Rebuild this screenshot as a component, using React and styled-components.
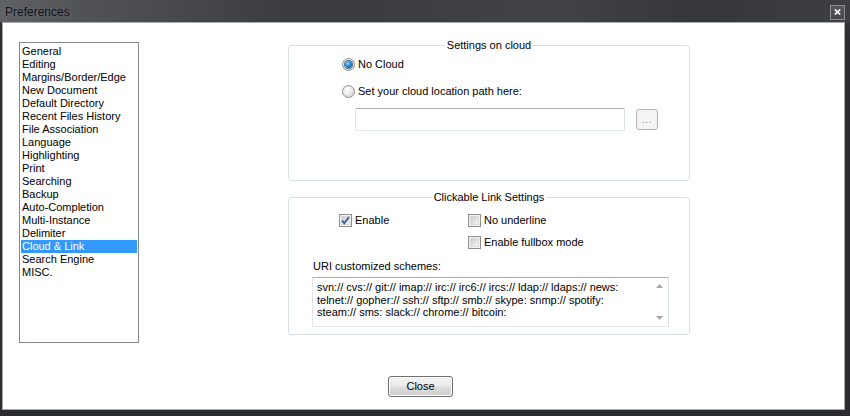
import React from "react";
import styled, { createGlobalStyle } from "styled-components";

const GlobalStyle = createGlobalStyle`
  html, body {
    margin: 0;
    padding: 0;
    background: #2d2f32;
  }
  body {
    font-family: "Liberation Sans", Arial, sans-serif;
    font-size: 11px;
    color: #000;
  }
`;

const Window = styled.div`
  width: 850px;
  height: 416px;
  display: flex;
  flex-direction: column;
  background: linear-gradient(#3b3d41, #2a2c2f 40px, #2a2c2f);
  overflow: hidden;
`;

const TitleBar = styled.div`
  height: 22px;
  display: flex;
  align-items: center;
  justify-content: space-between;
  padding: 0 5px 0 5px;
  box-sizing: border-box;
  background: linear-gradient(90deg, #606266 0px, #515357 80px, #393b3f 300px, #414347 560px, #34363a 700px, #3d3f42 850px);
`;

const Title = styled.span`
  font-size: 12px;
  color: #0e141a;
  text-shadow: 0 0 4px rgba(150, 152, 156, 0.5);
  line-height: 14px;
  padding-top: 2px;
`;

const CloseX = styled.div`
  width: 15px;
  height: 15px;
  box-sizing: border-box;
  border: 1px solid #8d8e91;
  background: linear-gradient(#55575b, #45474b);
  display: flex;
  align-items: center;
  justify-content: center;
  margin-top: 2px;
`;

const Frame = styled.div`
  flex: 1;
  margin: 0 5px 6px 2px;
  border: 1px solid #a9a9a9;
  background: #fff;
  display: flex;
  flex-direction: column;
`;

const Body = styled.div`
  display: flex;
  padding: 19px 0 0 16px;
`;

const ListBox = styled.div`
  width: 120px;
  height: 301px;
  box-sizing: border-box;
  border: 1px solid #828790;
  padding: 2px 1px 0 1px;
  flex-shrink: 0;
`;

const ListItem = styled.div`
  height: 13px;
  line-height: 13px;
  padding-left: 1px;
  white-space: nowrap;
  background: ${(p) => (p.$selected ? "#3399ff" : "transparent")};
  color: ${(p) => (p.$selected ? "#fff" : "#000")};
`;

const Panels = styled.div`
  margin-left: 149px;
  padding-top: 3px;
  display: flex;
  flex-direction: column;
  gap: 16px;
`;

const Group = styled.div`
  width: 402px;
  height: ${(p) => p.$height}px;
  box-sizing: border-box;
  border: 1px solid #d5dfe5;
  border-radius: 3px;
  display: flex;
  flex-direction: column;
`;

const GroupTitle = styled.span`
  align-self: center;
  margin-top: -7px;
  padding: 0 2px;
  background: #fff;
  line-height: 13px;
  height: 13px;
`;

const Row = styled.div`
  display: flex;
  align-items: center;
  height: 13px;
  line-height: 13px;
  margin-top: ${(p) => p.$top || 0}px;
  padding-left: ${(p) => p.$left || 0}px;
`;

const Option = styled.label`
  display: flex;
  align-items: center;
  gap: 3px;
  width: ${(p) => (p.$width ? `${p.$width}px` : "auto")};
  white-space: nowrap;
`;

const Radio = styled.span`
  width: 13px;
  height: 13px;
  box-sizing: border-box;
  border-radius: 50%;
  border: 1px solid #8e8f8f;
  background: radial-gradient(circle at 40% 35%, #ffffff 0%, #eaeaea 45%, #c8c8c8 100%);
  display: flex;
  align-items: center;
  justify-content: center;
  flex-shrink: 0;

  &::after {
    content: "";
    display: ${(p) => (p.$checked ? "block" : "none")};
    width: 7px;
    height: 7px;
    border-radius: 50%;
    background: radial-gradient(circle at 40% 35%, #8fd7ff 0%, #2a8ad4 45%, #0d3f73 100%);
    box-shadow: 0 0 0 1px #4d6b85;
  }
`;

const Checkbox = styled.span`
  width: 13px;
  height: 13px;
  box-sizing: border-box;
  border: 1px solid #8f8f8f;
  background: #f4f4f4;
  display: flex;
  align-items: center;
  justify-content: center;
  flex-shrink: 0;
  position: relative;

  &::before {
    content: "";
    position: absolute;
    inset: 1px;
    background: linear-gradient(135deg, #cbcbcb, #f6f6f6);
    border: 1px solid #d9d9d9;
    box-sizing: border-box;
  }

  svg {
    position: relative;
  }
`;

const PathRow = styled.div`
  display: flex;
  align-items: flex-start;
  margin-top: 10px;
  padding-left: 66px;
  gap: 11px;
`;

const TextInput = styled.div`
  width: 270px;
  height: 23px;
  box-sizing: border-box;
  border: 1px solid #abadb3;
  border-color: #abadb3 #dbdfe6 #e3e9ef #e2e3ea;
  border-radius: 2px;
  background: #fff;
`;

const BrowseButton = styled.div`
  width: 22px;
  height: 21px;
  margin-top: 1px;
  box-sizing: border-box;
  border: 1px solid #b5b5b5;
  border-radius: 3px;
  background: #f4f4f4;
  color: #8c8c8c;
  font-size: 10px;
  line-height: 20px;
  text-align: center;
  letter-spacing: 0.5px;
`;

const Label = styled.div`
  height: 13px;
  line-height: 13px;
  margin-top: ${(p) => p.$top}px;
  padding-left: 24px;
`;

const SchemesBox = styled.div`
  width: 357px;
  height: 50px;
  box-sizing: border-box;
  margin: 4px 0 0 23px;
  border: 1px solid #abadb3;
  border-color: #abadb3 #dbdfe6 #e3e9ef #e2e3ea;
  display: flex;
`;

const SchemesText = styled.div`
  flex: 1;
  padding: 3px 0 0 4px;
  line-height: 12.5px;
  white-space: nowrap;
`;

const ScrollBar = styled.div`
  width: 17px;
  display: flex;
  flex-direction: column;
  justify-content: space-between;
  align-items: center;
  padding: 6px 0 6px;
  box-sizing: border-box;
`;

const Footer = styled.div`
  padding: 33px 0 0 385px;
`;

const PushButton = styled.div`
  width: 65px;
  height: 21px;
  box-sizing: border-box;
  border: 1px solid #707070;
  border-radius: 3px;
  background: linear-gradient(#f2f2f2 0%, #ebebeb 48%, #dddddd 52%, #cfcfcf 100%);
  box-shadow: inset 0 0 0 1px #fcfcfc;
  text-align: center;
  line-height: 19px;
`;

const categories = [
  "General",
  "Editing",
  "Margins/Border/Edge",
  "New Document",
  "Default Directory",
  "Recent Files History",
  "File Association",
  "Language",
  "Highlighting",
  "Print",
  "Searching",
  "Backup",
  "Auto-Completion",
  "Multi-Instance",
  "Delimiter",
  "Cloud & Link",
  "Search Engine",
  "MISC.",
];

const schemes = [
  "svn:// cvs:// git:// imap:// irc:// irc6:// ircs:// ldap:// ldaps:// news:",
  "telnet:// gopher:// ssh:// sftp:// smb:// skype: snmp:// spotify:",
  "steam:// sms: slack:// chrome:// bitcoin:",
];

function CheckBox({ checked }) {
  return (
    <Checkbox>
      {checked && (
        <svg width="9" height="9" viewBox="0 0 9 9">
          <path d="M1 4.5 L3.3 7.2 L8 1" fill="none" stroke="#3a5c9c" strokeWidth="1.8" />
        </svg>
      )}
    </Checkbox>
  );
}

function Arrow({ down }) {
  return (
    <svg width="7" height="4" viewBox="0 0 7 4">
      <path d={down ? "M0 0 L7 0 L3.5 4 Z" : "M0 4 L7 4 L3.5 0 Z"} fill="#a6a6a6" />
    </svg>
  );
}

export default function App() {
  return (
    <>
      <GlobalStyle />
      <Window>
        <TitleBar>
          <Title>Preferences</Title>
          <CloseX>
            <svg width="7" height="6" viewBox="0 0 7 6">
              <path d="M0.8 0.5 L6.2 5.5 M6.2 0.5 L0.8 5.5" stroke="#fff" strokeWidth="1.7" />
            </svg>
          </CloseX>
        </TitleBar>
        <Frame>
          <Body>
            <ListBox>
              {categories.map((c) => (
                <ListItem key={c} $selected={c === "Cloud & Link"}>
                  {c}
                </ListItem>
              ))}
            </ListBox>
            <Panels>
              <Group $height={136}>
                <GroupTitle>Settings on cloud</GroupTitle>
                <Row $top={6} $left={53}>
                  <Option>
                    <Radio $checked />
                    No Cloud
                  </Option>
                </Row>
                <Row $top={14} $left={53}>
                  <Option>
                    <Radio />
                    Set your cloud location path here:
                  </Option>
                </Row>
                <PathRow>
                  <TextInput />
                  <BrowseButton>...</BrowseButton>
                </PathRow>
              </Group>
              <Group $height={138}>
                <GroupTitle>Clickable Link Settings</GroupTitle>
                <Row $top={10} $left={50}>
                  <Option $width={129}>
                    <CheckBox checked />
                    Enable
                  </Option>
                  <Option>
                    <CheckBox />
                    No underline
                  </Option>
                </Row>
                <Row $top={9} $left={179}>
                  <Option>
                    <CheckBox />
                    Enable fullbox mode
                  </Option>
                </Row>
                <Label $top={11}>URI customized schemes:</Label>
                <SchemesBox>
                  <SchemesText>
                    {schemes.map((s) => (
                      <div key={s}>{s}</div>
                    ))}
                  </SchemesText>
                  <ScrollBar>
                    <Arrow />
                    <Arrow down />
                  </ScrollBar>
                </SchemesBox>
              </Group>
            </Panels>
          </Body>
          <Footer>
            <PushButton>Close</PushButton>
          </Footer>
        </Frame>
      </Window>
    </>
  );
}
